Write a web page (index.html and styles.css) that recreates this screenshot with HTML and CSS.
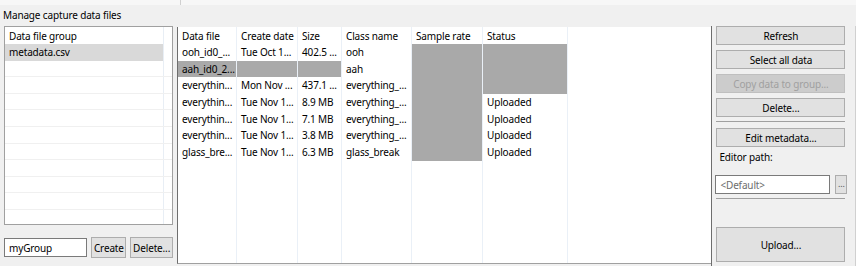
FILE: index.html
```html
<!DOCTYPE html>
<html>
<head>
<meta charset="utf-8">
<link rel="stylesheet" href="styles.css">
</head>
<body>
<div class="top"><div class="top-sep"></div></div>
<div class="title">Manage capture data files</div>
<div class="main">
  <div class="left">
    <div class="list">
      <div class="list-inner">
        <div class="lrow lhead">Data file group</div>
        <div class="lrow lsel">metadata.csv</div>
        <div class="lrow lline"></div>
        <div class="lrow lline"></div>
        <div class="lrow lline"></div>
        <div class="lrow lline"></div>
        <div class="lrow lline"></div>
        <div class="lrow lline"></div>
        <div class="lrow lline"></div>
        <div class="lrow lline"></div>
        <div class="lrow lline"></div>
        <div class="lrow"></div>
      </div>
    </div>
    <div class="groupbar">
      <div class="gin">myGroup</div>
      <div class="btn gbtn-create">Create</div>
      <div class="btn gbtn-del">Delete...</div>
    </div>
  </div>

  <div class="table">
    <div class="col c1">
      <div class="cell head">Data file</div>
      <div class="cell">ooh_id0_...</div>
      <div class="cell gray">aah_id0_2...</div>
      <div class="cell">everythin...</div>
      <div class="cell">everythin...</div>
      <div class="cell">everythin...</div>
      <div class="cell">everythin...</div>
      <div class="cell">glass_bre...</div>
    </div>
    <div class="col c2">
      <div class="cell head">Create date</div>
      <div class="cell">Tue Oct 1...</div>
      <div class="cell gray"></div>
      <div class="cell">Mon Nov ...</div>
      <div class="cell">Tue Nov 1...</div>
      <div class="cell">Tue Nov 1...</div>
      <div class="cell">Tue Nov 1...</div>
      <div class="cell">Tue Nov 1...</div>
    </div>
    <div class="col c3">
      <div class="cell head">Size</div>
      <div class="cell">402.5 ...</div>
      <div class="cell gray"></div>
      <div class="cell">437.1 ...</div>
      <div class="cell">8.9 MB</div>
      <div class="cell">7.1 MB</div>
      <div class="cell">3.8 MB</div>
      <div class="cell">6.3 MB</div>
    </div>
    <div class="col c4">
      <div class="cell head">Class name</div>
      <div class="cell">ooh</div>
      <div class="cell">aah</div>
      <div class="cell">everything_...</div>
      <div class="cell">everything_...</div>
      <div class="cell">everything_...</div>
      <div class="cell">everything_...</div>
      <div class="cell">glass_break</div>
    </div>
    <div class="col c5">
      <div class="cell head">Sample rate</div>
      <div class="cell gray"></div>
      <div class="cell gray"></div>
      <div class="cell gray"></div>
      <div class="cell gray"></div>
      <div class="cell gray"></div>
      <div class="cell gray"></div>
      <div class="cell gray"></div>
    </div>
    <div class="col c6">
      <div class="cell head">Status</div>
      <div class="cell gray"></div>
      <div class="cell gray"></div>
      <div class="cell gray"></div>
      <div class="cell">Uploaded</div>
      <div class="cell">Uploaded</div>
      <div class="cell">Uploaded</div>
      <div class="cell">Uploaded</div>
    </div>
    <div class="col c7"></div>
  </div>

  <div class="right">
    <div class="btn rbtn">Refresh</div>
    <div class="btn rbtn">Select all data</div>
    <div class="btn rbtn disabled">Copy data to group...</div>
    <div class="btn rbtn">Delete...</div>
    <div class="sep sep1"></div>
    <div class="btn rbtn edit">Edit metadata...</div>
    <div class="label">Editor path:</div>
    <div class="pathrow">
      <div class="pin">&lt;Default&gt;</div>
      <div class="btn dots">...</div>
    </div>
    <div class="sep sep2"></div>
    <div class="btn upload">Upload...</div>
  </div>
</div>
</body>
</html>
```

FILE: styles.css
```css
html, body {
  margin: 0;
  padding: 0;
}
body {
  width: 856px;
  height: 266px;
  overflow: hidden;
  background: #f0f0f0;
  font-family: "Noto Sans", "Open Sans", sans-serif;
  font-size: 10px;
  letter-spacing: -0.15px;
  color: #000;
}
.top {
  height: 5px;
  background: #f7f7f7;
  position: relative;
}
.top-sep {
  position: absolute;
  left: 180px;
  top: 0;
  width: 1px;
  height: 5px;
  background: #d0d0d0;
}
.title {
  height: 21px;
  line-height: 20px;
  padding-left: 3px;
  white-space: nowrap;
}
.main {
  display: flex;
  height: 240px;
}
.left {
  width: 169px;
  margin-left: 4px;
  display: flex;
  flex-direction: column;
}
.list {
  height: 197px;
  border: 1px solid #a0a0a0;
  background: #fff;
  overflow: hidden;
}
.list-inner {
  width: 158px;
  height: 100%;
  border-right: 1px solid #e8eef5;
}
.lrow {
  height: 16.6px;
  line-height: 17.6px;
  padding-left: 4px;
  white-space: nowrap;
  box-sizing: border-box;
  width: 168px;
}
.lhead {
  height: 17px;
  line-height: 18px;
}
.lsel {
  background: #d9d9d9;
  width: 158px;
}
.lline {
  border-bottom: 1px solid #f0f0f0;
}
.groupbar {
  display: flex;
  align-items: center;
  margin-top: 12px;
  height: 21px;
}
.gin {
  width: 78px;
  height: 17px;
  line-height: 18px;
  border: 1px solid #7a7a7a;
  background: #fff;
  padding-left: 4px;
}
.btn {
  background: #e1e1e1;
  border: 1px solid #adadad;
  text-align: center;
  white-space: nowrap;
  box-sizing: border-box;
}
.gbtn-create {
  width: 35px;
  height: 21px;
  line-height: 20px;
  margin-left: 4px;
}
.gbtn-del {
  width: 43px;
  height: 21px;
  line-height: 20px;
  margin-left: 4px;
}
.table {
  width: 536px;
  height: 237px;
  margin-top: 1px;
  margin-left: 4px;
  box-sizing: border-box;
  border-left: 1px solid #6e6e6e;
  border-bottom: 1px solid #a0a0a0;
  background: #fff;
  display: flex;
}
.col {
  border-right: 1px solid #eaf0f7;
  display: flex;
  flex-direction: column;
}
.c1 { width: 58px; }
.c2 { width: 60px; }
.c3 { width: 43px; }
.c4 { width: 69px; }
.c5 { width: 70px; }
.c6 { width: 84px; }
.c7 { flex: 1; border-right: none; }
.cell {
  height: 16.67px;
  line-height: 17.67px;
  padding-left: 4px;
  white-space: nowrap;
  overflow: hidden;
}
.cell.head {
  height: 17px;
  line-height: 18px;
}
.cell.gray {
  background: #a9a9a9;
}
.right {
  width: 134px;
  margin-left: 0;
  border-left: 1px solid #6e6e6e;
  border-right: 1px solid #d0d0d0;
  padding-left: 4px;
  padding-right: 5px;
  display: flex;
  flex-direction: column;
}
.rbtn {
  width: 129px;
  height: 19px;
  line-height: 18px;
  margin-bottom: 5px;
}
.rbtn.disabled {
  background: #cccccc;
  border-color: #bfbfbf;
  color: #a0a0a0;
}
.sep {
  height: 0;
  border-top: 1px solid #a0a0a0;
  width: 129px;
}
.sep1 {
  margin-top: -1px;
}
.edit {
  margin-top: 6px;
  margin-bottom: 0;
}
.label {
  height: 20px;
  line-height: 21px;
  padding-left: 3px;
}
.pathrow {
  display: flex;
  margin-top: 8px;
  margin-left: -1px;
  height: 19px;
}
.pin {
  width: 109px;
  height: 17px;
  line-height: 18px;
  border: 1px solid #7a7a7a;
  background: #fff;
  padding-left: 4px;
  color: #6d6d6d;
  white-space: nowrap;
}
.dots {
  width: 12px;
  height: 19px;
  line-height: 16px;
  margin-left: 5px;
  font-size: 9px;
  color: #555;
}
.sep2 {
  margin-top: 4px;
}
.upload {
  width: 129px;
  height: 35px;
  line-height: 34px;
  margin-top: 28px;
}
```
